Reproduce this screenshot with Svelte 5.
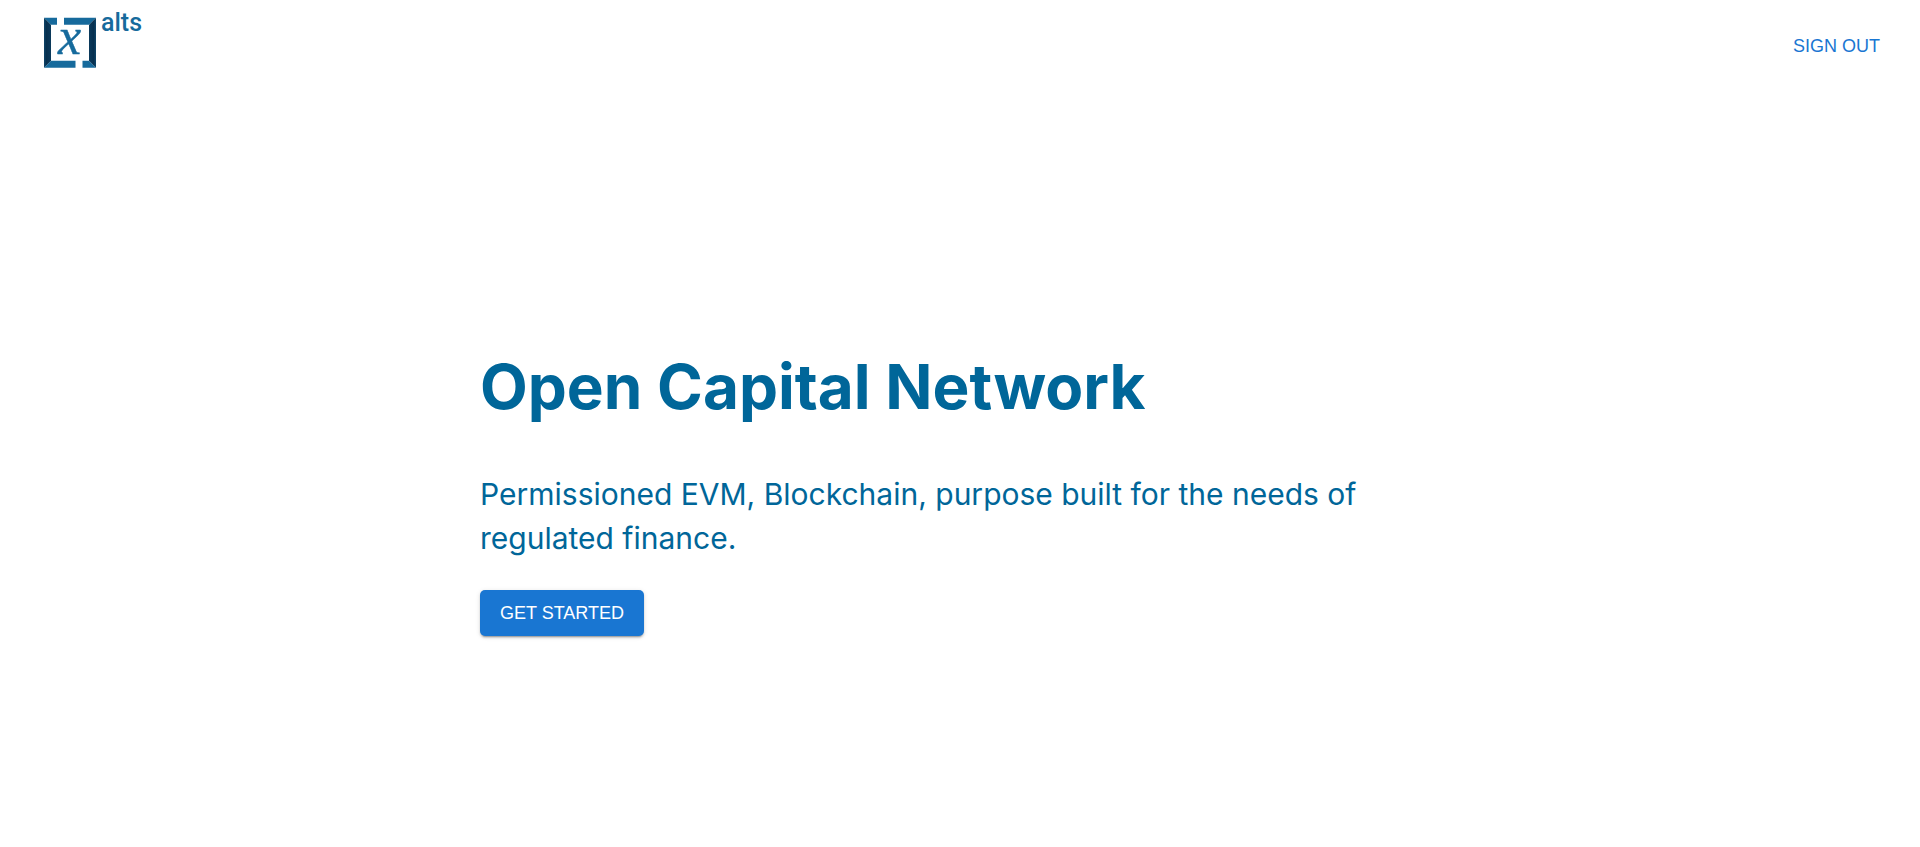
<script>
  const title = 'Open Capital Network';
  const tagline =
    'Permissioned EVM, Blockchain, purpose built for the needs of regulated finance.';
</script>

<header class="bar">
  <a class="brand" href="/" aria-label="xalts home">
    <svg width="120" height="80" viewBox="0 -10 120 80" aria-hidden="true">
      <defs>
        <linearGradient id="edge-left" x1="0" x2="1">
          <stop offset="0" stop-color="#0e4468" />
          <stop offset="0.35" stop-color="#07304f" />
          <stop offset="1" stop-color="#0b3a5c" />
        </linearGradient>
        <linearGradient id="edge-right" x1="1" x2="0">
          <stop offset="0" stop-color="#0e4468" />
          <stop offset="0.35" stop-color="#07304f" />
          <stop offset="1" stop-color="#0b3a5c" />
        </linearGradient>
      </defs>
      <g fill="#166a9c">
        <path d="M4 7.7H17V14.7H11Z" />
        <path d="M24 7.7H56L49 14.7H24Z" />
        <path d="M4 57.7L11 50.7H35.5V57.7Z" />
        <path d="M42.5 50.7H49L56 57.7H42.5Z" />
      </g>
      <path d="M4 7.7L11 14.7V50.7L4 57.7Z" fill="url(#edge-left)" />
      <path d="M56 7.7L49 14.7V50.7L56 57.7Z" fill="url(#edge-right)" />
      <text class="mark" x="18" y="44">x</text>
      <text class="word" x="61" y="21">alts</text>
    </svg>
  </a>
  <button class="btn text" type="button">Sign out</button>
</header>

<main class="hero">
  <h1>{title}</h1>
  <p>{tagline}</p>
  <button class="btn filled" type="button">Get started</button>
</main>

<style>
  :global(body) {
    background: #fff;
  }

  .bar {
    display: flex;
    align-items: center;
    justify-content: space-between;
    min-height: 92px;
    padding: 0 20px 0 40px;
  }

  .brand {
    display: flex;
    align-self: flex-start;
  }

  .mark {
    font: italic 52px 'Liberation Serif', serif;
    fill: #166a9c;
    stroke: #166a9c;
    stroke-width: 0.4px;
  }

  .word {
    font: 500 25px Roboto, sans-serif;
    fill: #166a9c;
  }

  .btn {
    border: 0;
    border-radius: 5px;
    padding: 12px 20px;
    font: 18px/22px 'Liberation Sans', Arial, sans-serif;
    text-transform: uppercase;
    cursor: pointer;
  }

  .text {
    background: transparent;
    color: #1976d2;
  }

  .filled {
    background: #1976d2;
    color: #fff;
    box-shadow:
      0 3px 1px -2px rgba(0, 0, 0, 0.2),
      0 2px 2px 0 rgba(0, 0, 0, 0.14),
      0 1px 5px 0 rgba(0, 0, 0, 0.12);
  }

  .hero {
    width: 50%;
    margin: 0 auto;
    padding: 250px 0 96px;
    color: #006699;
    font-family: Inter, sans-serif;
  }

  h1 {
    margin: 0 0 40px;
    font-size: 62px;
    line-height: 90px;
    font-weight: 700;
  }

  p {
    margin: 0 0 30px;
    font-size: 30px;
    line-height: 44px;
  }
</style>
